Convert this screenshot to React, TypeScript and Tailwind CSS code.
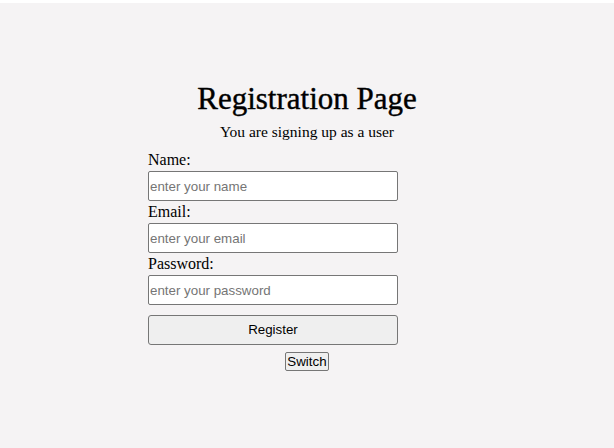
import { useState } from "react";

const fields = [
  { id: "name", label: "Name:", type: "text", placeholder: "enter your name" },
  { id: "email", label: "Email:", type: "email", placeholder: "enter your email" },
  { id: "password", label: "Password:", type: "password", placeholder: "enter your password" },
];

const App = () => {
  const [role, setRole] = useState<"user" | "admin">("user");

  return (
    <div className="bg-white pt-[3px] font-['Liberation_Serif',serif] text-black">
      <div className="min-h-[445px] bg-[#f5f3f4] pt-[78px]">
        {/* Heading */}
        <h1 className="text-center text-[31px] leading-[36px] font-normal [-webkit-text-stroke:0.4px_black]">
          Registration Page
        </h1>
        <p className="mt-[5px] text-center text-[15.5px] leading-[20px]">
          You are signing up as a {role}
        </p>

        {/* Form */}
        <form
          className="mx-auto mt-[7px] flex w-[318px] flex-col items-start"
          onSubmit={(e) => e.preventDefault()}
        >
          {fields.map((field) => (
            <div key={field.id} className="flex flex-col">
              <label htmlFor={field.id} className="text-[16px] leading-[22px]">
                {field.label}
              </label>
              <input
                id={field.id}
                type={field.type}
                placeholder={field.placeholder}
                className="h-[30px] w-[250px] rounded-[2px] border border-[#767676] bg-white px-[1px] font-['Liberation_Sans',Arial,sans-serif] text-[13.33px] placeholder:text-[#757575]"
              />
            </div>
          ))}
          <button
            type="submit"
            className="mt-[10px] h-[30px] w-[250px] rounded-[3px] border border-[#767676] bg-[#efefef] font-['Liberation_Sans',Arial,sans-serif] text-[13.33px]"
          >
            Register
          </button>
          <button
            type="button"
            onClick={() => setRole(role === "user" ? "admin" : "user")}
            className="mt-[7px] h-[19px] self-center rounded-[2px] border border-[#767676] bg-[#efefef] px-[1px] font-['Liberation_Sans',Arial,sans-serif] text-[13.33px] leading-[15px]"
          >
            Switch
          </button>
        </form>
      </div>
    </div>
  );
};

export default App;
